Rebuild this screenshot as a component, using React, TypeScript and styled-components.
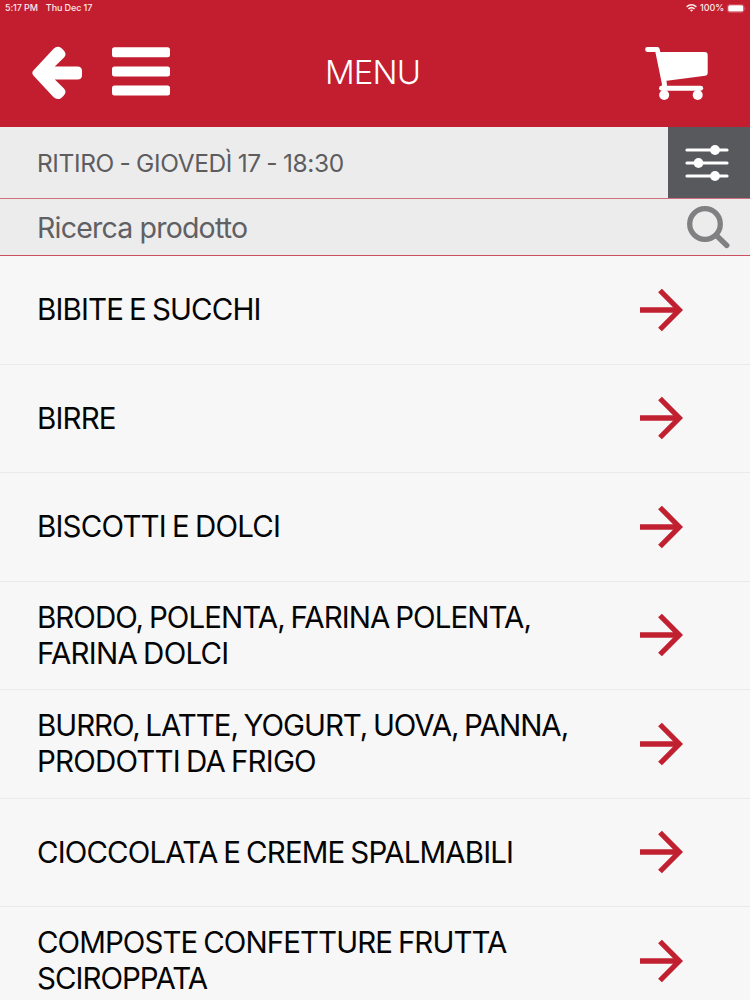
import React from "react";
import styled, { createGlobalStyle } from "styled-components";

const RED = "#c21e30";

const GlobalStyle = createGlobalStyle`
  *, *::before, *::after { box-sizing: border-box; }
  html, body { margin: 0; padding: 0; }
  body { background: #f8f7f8; font-family: Inter, "Liberation Sans", sans-serif; }
`;

const Screen = styled.div`
  width: 750px;
  height: 1000px;
  overflow: hidden;
  display: flex;
  flex-direction: column;
  background: #f8f7f8;
`;

const TopBar = styled.header`
  flex: none;
  height: 127px;
  display: flex;
  flex-direction: column;
  background: ${RED};
  color: #fff;
`;

const StatusBar = styled.div`
  flex: none;
  height: 16px;
  padding: 0 3px 0 5px;
  display: flex;
  align-items: center;
  justify-content: space-between;
  font-size: 9px;
  line-height: 16px;
  color: #fbe9e9;
`;

const StatusGroup = styled.div<{ $gap: number }>`
  display: flex;
  align-items: center;
  gap: ${(p) => p.$gap}px;
`;

const StatusText = styled.span`
  letter-spacing: -0.1px;
  font-weight: 500;
`;

const NavBar = styled.div`
  flex: 1;
  display: grid;
  grid-template-columns: 1fr auto 1fr;
  align-items: center;
  padding: 0 41px 0 31px;
`;

const NavIcons = styled.div<{ $end?: boolean }>`
  display: flex;
  align-items: center;
  gap: 28px;
  justify-content: ${(p) => (p.$end ? "flex-end" : "flex-start")};
`;

const IconButton = styled.button`
  border: 0;
  padding: 0;
  background: none;
  color: inherit;
  display: flex;
`;

const Title = styled.h1`
  margin: 0;
  padding-left: 5px;
  font-size: 33px;
  line-height: 40px;
  font-weight: 340;
  letter-spacing: -0.9px;
`;

const PickupBar = styled.div`
  flex: none;
  height: 72px;
  display: flex;
  border-bottom: 1px solid #d0707f;
  background: #ececed;
`;

const PickupText = styled.div`
  flex: 1;
  padding-left: 37px;
  font-size: 24.5px;
  line-height: 72px;
  letter-spacing: -0.4px;
  word-spacing: -0.8px;
  color: #5d5d60;
`;

const FilterButton = styled.button`
  width: 82px;
  border: 0;
  padding: 0 5px 0 0;
  display: flex;
  align-items: center;
  justify-content: center;
  background: #58595d;
  color: #fff;
`;

const SearchBar = styled.div`
  flex: none;
  height: 57px;
  padding: 0 20px 0 37px;
  display: flex;
  align-items: center;
  justify-content: space-between;
  border-bottom: 1px solid #cb5064;
  background: #ececed;
  color: #808082;
`;

const SearchText = styled.span`
  font-size: 28.5px;
  letter-spacing: -0.8px;
  color: #606063;
`;

const List = styled.ul`
  margin: 0;
  padding: 0;
  list-style: none;
`;

const Row = styled.li`
  height: 108.5px;
  padding: 0 66px 0 37px;
  display: flex;
  align-items: center;
  justify-content: space-between;
  border-bottom: 1px solid #ebeaeb;
`;

const Label = styled.div`
  padding-bottom: 1px;
  display: flex;
  flex-direction: column;
`;

const Line = styled.span<{ $spacing: number }>`
  font-size: 29.5px;
  line-height: 36px;
  white-space: nowrap;
  word-spacing: -1.5px;
  color: #050505;
  letter-spacing: ${(p) => p.$spacing}px;
`;

const BackIcon = () => (
  <svg width="52" height="56" viewBox="0 0 52 56" fill="currentColor">
    <path d="M2.600 26.300L22.600 4.700Q26.500 1.300 30.300 4.100L32.600 6.300Q36.200 10 33 13.400L23.800 22.500H46.500Q51 22.500 51 27V31Q51 35.500 46.500 35.500H23.800L33 44.500Q36.200 48 32.600 51.700L30.300 53.900Q26.500 56.600 22.600 53.300L2.600 31.700Q0 29 2.600 26.300Z" />
  </svg>
);

const MenuIcon = () => (
  <svg width="60" height="50" viewBox="0 0 60 50" fill="currentColor">
    <rect x="1" y="0.300" width="58" height="10" rx="2.500" />
    <rect x="1" y="19.400" width="58" height="10" rx="2.500" />
    <rect x="1" y="38.500" width="58" height="10" rx="2.500" />
  </svg>
);

const CartIcon = () => (
  <svg width="64" height="58" viewBox="0 -2 64 58" fill="currentColor">
    <path d="M2.500 4.500H12.300L19.500 39.500" fill="none" stroke="currentColor" strokeWidth="4.800" strokeLinecap="round" strokeLinejoin="round" />
    <path d="M13.500 6.900H59.700Q62.700 6.900 62.700 9.900V27.900Q62.700 30.400 60.200 30.700L20 35.900Z" />
    <path d="M16.500 43.200H55.700" fill="none" stroke="currentColor" strokeWidth="4.900" strokeLinecap="round" />
    <path d="M17 36H21.300V43H15.500Q17.500 41 17 36Z" />
    <circle cx="19.200" cy="50" r="5" />
    <circle cx="52.700" cy="50" r="5" />
  </svg>
);

const SlidersIcon = () => (
  <svg width="44" height="38" viewBox="0 0 44 38" fill="currentColor">
    <path d="M2 6H42M2 19H42M2 32H42" stroke="currentColor" strokeWidth="3.200" strokeLinecap="round" />
    <circle cx="30" cy="6" r="4.900" />
    <circle cx="13.500" cy="19" r="4.900" />
    <circle cx="30" cy="32" r="4.900" />
  </svg>
);

const SearchIcon = () => (
  <svg width="44" height="44" viewBox="0 0 44 44" fill="none" stroke="currentColor" strokeLinecap="round">
    <circle cx="19" cy="19" r="15.300" strokeWidth="5.300" />
    <path d="M31 31L40.800 40.500" strokeWidth="5.300" />
  </svg>
);

const ArrowIcon = () => (
  <svg width="44" height="44" viewBox="0 0 44 44" fill="none" stroke="#c0202f" strokeWidth="5.300">
    <path d="M0 22H39" />
    <path d="M20 2.500L39.300 22L20 41.500" />
  </svg>
);

const WifiIcon = () => (
  <svg width="11" height="8" viewBox="0 0 11 8" fill="none" stroke="currentColor" strokeWidth="1.500">
    <path d="M0.600 2.900Q5.500 -1.300 10.400 2.900" />
    <path d="M2.400 4.900Q5.500 2.300 8.600 4.900" />
    <path d="M5.500 7.800L3.900 6.100Q5.500 4.900 7.100 6.100Z" fill="currentColor" stroke="none" />
  </svg>
);

const BatteryIcon = () => (
  <svg width="20" height="9" viewBox="0 0 20 9">
    <rect x="0.400" y="0.400" width="16.700" height="8" rx="2.400" fill="none" stroke="#d9626d" strokeWidth="0.700" />
    <rect x="1.200" y="1.200" width="15.100" height="6.400" rx="1.500" fill="#fff" />
    <path d="M17.900 3.200Q19 4.400 17.900 5.600Z" fill="#e58a92" />
  </svg>
);

const categories: { text: string; spacing: number }[][] = [
  [{ text: "BIBITE E SUCCHI", spacing: -0.85 }],
  [{ text: "BIRRE", spacing: -0.85 }],
  [{ text: "BISCOTTI E DOLCI", spacing: -0.8 }],
  [
    { text: "BRODO, POLENTA, FARINA POLENTA,", spacing: -0.96 },
    { text: "FARINA DOLCI", spacing: -0.75 },
  ],
  [
    { text: "BURRO, LATTE, YOGURT, UOVA, PANNA,", spacing: -1.06 },
    { text: "PRODOTTI DA FRIGO", spacing: -0.8 },
  ],
  [{ text: "CIOCCOLATA E CREME SPALMABILI", spacing: -0.87 }],
  [
    { text: "COMPOSTE CONFETTURE FRUTTA", spacing: -0.94 },
    { text: "SCIROPPATA", spacing: -1 },
  ],
];

export default function App() {
  return (
    <Screen>
      <GlobalStyle />
      <TopBar>
        <StatusBar>
          <StatusGroup $gap={8}>
            <StatusText>5:17 PM</StatusText>
            <StatusText>Thu Dec 17</StatusText>
          </StatusGroup>
          <StatusGroup $gap={3}>
            <WifiIcon />
            <StatusText>100%</StatusText>
            <BatteryIcon />
          </StatusGroup>
        </StatusBar>
        <NavBar>
          <NavIcons>
            <IconButton aria-label="Indietro"><BackIcon /></IconButton>
            <IconButton aria-label="Menu"><MenuIcon /></IconButton>
          </NavIcons>
          <Title>MENU</Title>
          <NavIcons $end>
            <IconButton aria-label="Carrello"><CartIcon /></IconButton>
          </NavIcons>
        </NavBar>
      </TopBar>
      <PickupBar>
        <PickupText>RITIRO - GIOVEDÌ 17 - 18:30</PickupText>
        <FilterButton aria-label="Filtri"><SlidersIcon /></FilterButton>
      </PickupBar>
      <SearchBar>
        <SearchText>Ricerca prodotto</SearchText>
        <SearchIcon />
      </SearchBar>
      <List>
        {categories.map((lines) => (
          <Row key={lines[0].text}>
            <Label>
              {lines.map((line) => (
                <Line key={line.text} $spacing={line.spacing}>{line.text}</Line>
              ))}
            </Label>
            <ArrowIcon />
          </Row>
        ))}
      </List>
    </Screen>
  );
}
